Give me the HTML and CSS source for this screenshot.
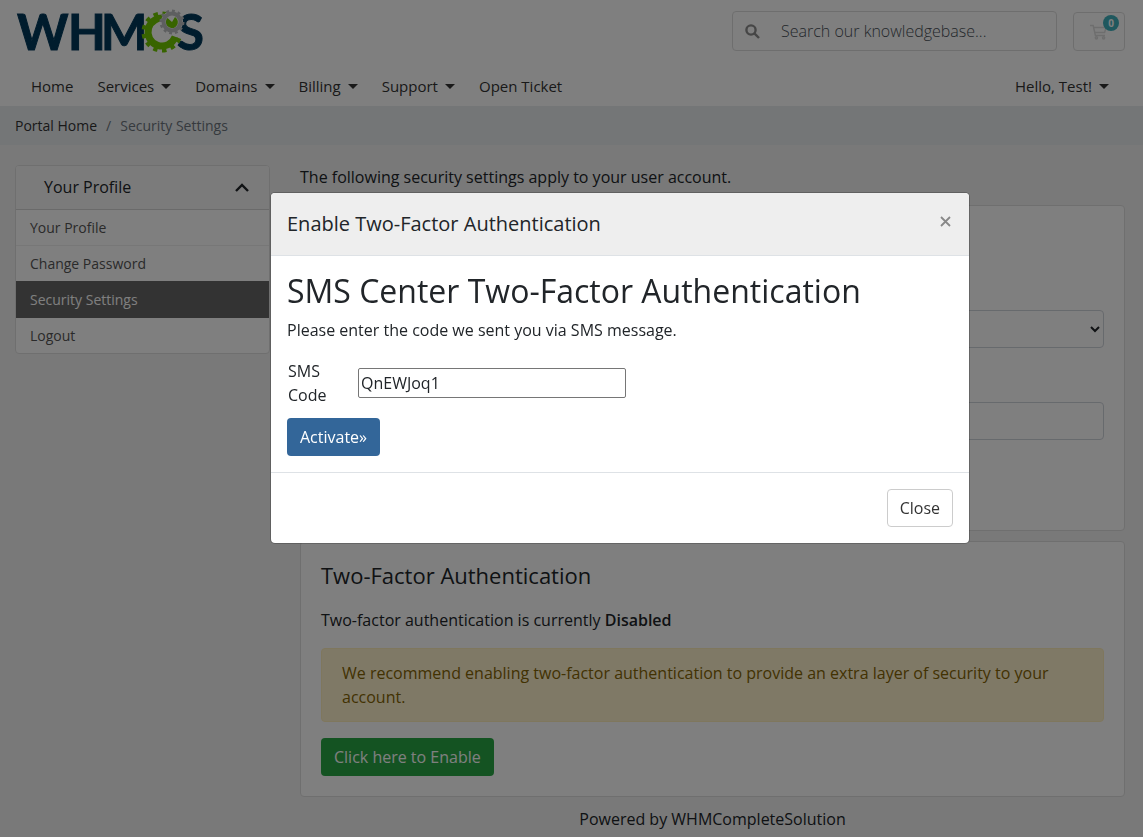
FILE: index.html
```
<!DOCTYPE html>
<html lang="en">
<head>
  <meta charset="UTF-8">
  <meta name="viewport" content="width=device-width, initial-scale=1.0">
  <title>Security Settings - WHMCS</title>
  <link rel="stylesheet" href="styles.css">
</head>
<body>

<header class="header">
  <div class="container topbar">
    <a class="logo" href="#" aria-label="WHMCS">
      <svg width="192" height="44" viewBox="0 0 192 44">
        <g class="logo-text">
          <text x="2" y="41">W</text>
          <text x="53" y="41">H</text>
          <text x="86" y="41">M</text>
          <text x="162" y="41">S</text>
        </g>
        <!-- green gear -->
        <g fill="none" stroke="#70c800">
          <path d="M160.2 27.8 A14 14 0 1 1 150.6 9.5" stroke-width="7"/>
          <path d="M163.9 29.2 A18 18 0 1 1 151.7 5.6" stroke-width="5" pathLength="19" stroke-dasharray="1 1"/>
        </g>
        <!-- grey gear -->
        <circle cx="157" cy="13" r="11" fill="#fff"/>
        <g fill="none" stroke="#bcbec0">
          <circle cx="157" cy="13" r="8.5" stroke-width="4"/>
          <circle cx="157" cy="13" r="11.2" stroke-width="2.6" pathLength="24" stroke-dasharray="1 1"/>
        </g>
        <path d="M157 13 L152.5 9 A6 6 0 1 0 162 10 L160 8 Z" fill="#70c800"/>
      </svg>
    </a>
    <form class="search">
      <button type="button" aria-label="Search">
        <svg width="15" height="15" viewBox="0 0 15 15" fill="none" stroke="#8c8c8c" stroke-width="2.4">
          <circle cx="6" cy="6" r="4.6"/>
          <path d="M9.4 9.4 L14 14"/>
        </svg>
      </button>
      <input type="text" placeholder="Search our knowledgebase..." aria-label="Search our knowledgebase">
    </form>
    <a class="cart" href="#" aria-label="Shopping cart">
      <svg width="18" height="16" viewBox="0 0 18 16" fill="none" stroke="#ddd" stroke-width="1.5">
        <path d="M0 1.5 H3.2 L5.4 11.5 H15"/>
        <path d="M3.8 3.5 H16 L14.6 8.6 H5"/>
        <circle cx="6.4" cy="13.8" r="1.1"/>
        <circle cx="13.6" cy="13.8" r="1.1"/>
      </svg>
      <span class="badge">0</span>
    </a>
  </div>
  <nav class="container navbar">
    <a href="#">Home</a>
    <a href="#" class="dropdown">Services</a>
    <a href="#" class="dropdown">Domains</a>
    <a href="#" class="dropdown">Billing</a>
    <a href="#" class="dropdown">Support</a>
    <a href="#">Open Ticket</a>
    <a href="#" class="dropdown account">Hello, Test!</a>
  </nav>
</header>

<div class="breadcrumb">
  <div class="container">
    <a href="#">Portal Home</a><span class="sep">/</span><span>Security Settings</span>
  </div>
</div>

<div class="container page">
  <aside class="sidebar">
    <h3>
      Your Profile
      <svg width="14" height="9" viewBox="0 0 14 9" fill="none" stroke="#212529" stroke-width="2.4">
        <path d="M1 8 L7 2 L13 8"/>
      </svg>
    </h3>
    <a href="#">Your Profile</a>
    <a href="#">Change Password</a>
    <a href="#" class="active">Security Settings</a>
    <a href="#">Logout</a>
  </aside>

  <main>
    <p>The following security settings apply to your user account.</p>

    <section class="card question-card">
      <select class="form-control" aria-label="Security question"><option></option></select>
      <input type="text" class="form-control" aria-label="Security answer">
    </section>

    <section class="card">
      <h3>Two-Factor Authentication</h3>
      <p>Two-factor authentication is currently <strong>Disabled</strong></p>
      <div class="alert">We recommend enabling two-factor authentication to provide an extra layer of security to your account.</div>
      <button type="button" class="btn btn-success">Click here to Enable</button>
    </section>

    <footer>Powered by <a href="#">WHMCompleteSolution</a></footer>
  </main>
</div>

<div class="backdrop"></div>

<div class="modal" role="dialog" aria-labelledby="modal-title">
  <div class="modal-header">
    <h4 id="modal-title">Enable Two-Factor Authentication</h4>
    <button type="button" class="close" aria-label="Close">
      <svg width="11" height="11" viewBox="0 0 11 11" stroke="#888" stroke-width="1.8">
        <path d="M1 1 L10 10 M10 1 L1 10"/>
      </svg>
    </button>
  </div>
  <form>
    <div class="modal-body">
      <h2>SMS Center Two-Factor Authentication</h2>
      <p>Please enter the code we sent you via SMS message.</p>
      <div class="code-row">
        <label for="code">SMS Code</label>
        <input type="text" id="code" value="QnEWJoq1">
      </div>
      <button type="button" class="btn btn-primary">Activate»</button>
    </div>
    <div class="modal-footer">
      <button type="button" class="btn btn-default">Close</button>
    </div>
  </form>
</div>

</body>
</html>
```
FILE: styles.css
```
* {
  box-sizing: border-box;
}
body {
  margin: 0;
  font-family: "Open Sans", sans-serif;
  font-size: 16px;
  line-height: 24px;
  background-color: #f2f2f2;
  color: #212529;
}
h2, h3, h4, p {
  margin: 0;
  font-weight: 400;
}
p {
  margin-bottom: 16px;
}
a {
  color: inherit;
  text-decoration: none;
}
button, input, select {
  font: inherit;
  color: inherit;
}
strong {
  font-weight: 600;
}
.container {
  max-width: 1140px;
  padding: 0 15px;
}

/* header */
.header {
  background-color: #fff;
}
.topbar {
  display: flex;
  align-items: flex-end;
  padding-top: 11px;
}
.logo {
  margin-right: auto;
}
.logo svg {
  display: block;
  height: 44px;
  margin: -2px 0;
  overflow: visible;
}
.logo-text {
  font-family: Lato, sans-serif;
  font-size: 49px;
  font-weight: 700;
  fill: #00385a;
  stroke: #00385a;
  stroke-width: 1px;
}
.search {
  display: flex;
  width: 325px;
  height: 40px;
  border: 1px solid #ddd;
  border-radius: 4px;
  overflow: hidden;
}
.search button {
  width: 38px;
  padding: 3px 0 0;
  border: 0;
  background: none;
}
.search input {
  flex: 1;
  min-width: 0;
  padding: 0 10px;
  border: 0;
  background: none;
}
.search input::placeholder {
  color: #495057;
  font-weight: 300;
  opacity: 1;
}
.cart {
  position: relative;
  display: flex;
  align-items: center;
  justify-content: center;
  width: 52px;
  height: 39px;
  margin-left: 16px;
  border: 1px solid #ddd;
  border-radius: 4px;
}
.badge {
  position: absolute;
  top: 2px;
  right: 5px;
  width: 16px;
  height: 16px;
  border-radius: 8px;
  background-color: #3fb0bd;
  color: #fff;
  font-size: 10px;
  font-weight: 700;
  line-height: 16px;
  text-align: center;
}
.navbar {
  display: flex;
  padding: 16px 19px 0;
  font-size: 15px;
  line-height: 23px;
}
.navbar a {
  padding: 8px 12px;
  color: #333;
}
.dropdown::after {
  content: "";
  display: inline-block;
  margin-left: 7px;
  vertical-align: 3px;
  border-top: 5px solid;
  border-left: 5px solid transparent;
  border-right: 5px solid transparent;
}
.navbar .account {
  margin-left: auto;
}

/* breadcrumb */
.breadcrumb {
  padding: 9px 0;
  background-color: #e9ecef;
  color: #6c757d;
  font-size: 14px;
  line-height: 21px;
}
.breadcrumb a {
  color: #333;
}
.sep {
  padding: 0 9px;
}

/* page */
.page {
  display: grid;
  grid-template-columns: 255px 1fr;
  gap: 30px;
  align-items: start;
  padding-top: 20px;
}
.sidebar {
  border: 1px solid #dfdfdf;
  border-radius: 4px;
  background-color: #fff;
  font-size: 14px;
  line-height: 21px;
  overflow: hidden;
}
.sidebar h3 {
  display: flex;
  align-items: center;
  justify-content: space-between;
  padding: 9px 20px 9px 28px;
  background-color: #f7f7f7;
  font-size: 16px;
  line-height: 25px;
}
.sidebar a {
  display: block;
  padding: 7px 14px;
  border-top: 1px solid #eee;
  color: #555;
}
.sidebar h3 + a {
  border-top-color: #d5d5d5;
}
.sidebar .active {
  background-color: #666;
  border-color: #666;
  color: #fff;
}
.sidebar .active + a {
  border-top-color: #666;
}
.card {
  margin-bottom: 10px;
  padding: 20px;
  border: 1px solid #dfdfdf;
  border-radius: 4px;
  background-color: #fff;
}
.card h3 {
  margin-bottom: 20px;
  font-size: 22px;
  line-height: 26px;
}
.question-card {
  display: grid;
  gap: 54px;
  padding: 104px 20px 90px;
}
.form-control {
  width: 100%;
  height: 38px;
  border: 1px solid #ced4da;
  border-radius: 4px;
  background-color: #fff;
}
.alert {
  margin-bottom: 16px;
  padding: 12px 20px;
  border: 1px solid #ffeeba;
  border-radius: 4px;
  background-color: #fff3cd;
  color: #856404;
}
.btn {
  display: block;
  padding: 6px 12px;
  border: 1px solid transparent;
  border-radius: 4px;
}
.btn-primary {
  background-color: #336699;
  color: #fff;
}
.btn-success {
  background-color: #28a745;
  color: #fff;
}
.btn-default {
  border-color: #ccc;
  background-color: #fff;
  color: #333;
}
footer {
  text-align: center;
}

/* modal */
.backdrop {
  position: fixed;
  inset: 0;
  background-color: rgba(0, 0, 0, 0.5);
}
.modal {
  position: absolute;
  top: 192px;
  left: 270px;
  width: 700px;
  border: 1px solid rgba(0, 0, 0, 0.2);
  border-radius: 5px;
  background-color: #fff;
  background-clip: padding-box;
  overflow: hidden;
}
.modal-header {
  display: flex;
  align-items: flex-start;
  justify-content: space-between;
  padding: 16px;
  border-bottom: 1px solid #dee2e6;
  background-color: #eee;
}
.modal-header h4 {
  font-size: 20px;
  line-height: 30px;
}
.close {
  display: flex;
  padding: 7px 2px;
  border: 0;
  background: none;
}
.modal-body {
  padding: 16px;
}
.modal-body h2 {
  margin-bottom: 8px;
  font-size: 32px;
  line-height: 38px;
}
.code-row {
  display: grid;
  grid-template-columns: 70px 268px;
  align-items: center;
  margin-bottom: 10px;
  padding: 1px;
}
.code-row input {
  height: 30px;
  padding: 1px 2px;
  border: 1px solid #767676;
  border-radius: 2px;
  background-color: #fff;
}
.modal-footer {
  display: flex;
  justify-content: flex-end;
  padding: 16px;
  border-top: 1px solid #dee2e6;
}
```
